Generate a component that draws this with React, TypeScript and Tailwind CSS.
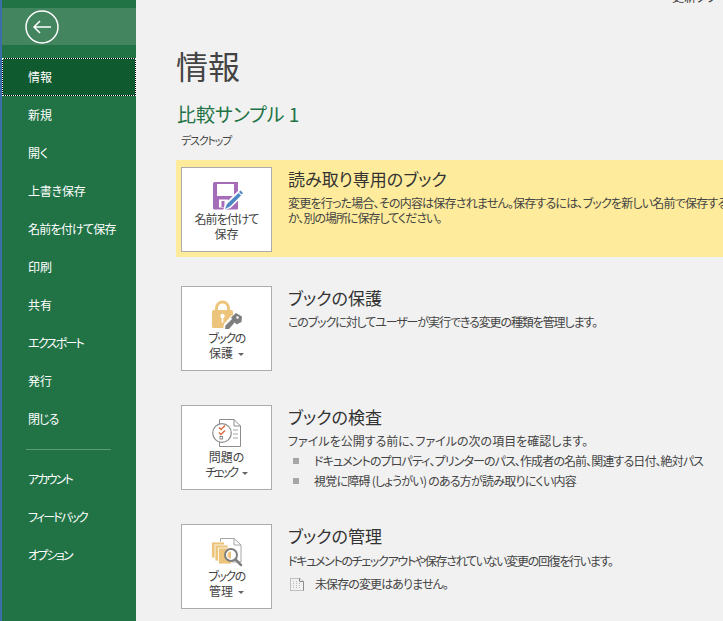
import React from "react";

function SaveIcon() {
  return (
    <svg width="32" height="30" viewBox="0 0 32 30" className="ml-[3px]">
      <path d="M1 2.500 a1.500 1.500 0 0 1 1.500-1.500 H26 V27.500 a1 1 0 0 1-1 1 H2.500 a1.500 1.500 0 0 1-1.500-1.500 Z" fill="#A56CB8" />
      <rect x="5" y="3" width="17" height="12" fill="#fff" />
      <rect x="7" y="18.500" width="9" height="8" fill="#fff" />
      <rect x="9.500" y="20" width="3" height="6" fill="#A56CB8" />
      <path d="M11 29.500 L13.500 22 L27 9 L32 14 L18.500 27 Z" fill="#fff" />
      <path d="M13 28 L15 23 L26.500 12 L29 14.500 L18 25.500 Z" fill="#4E88C4" />
      <path d="M27 11 L28.500 9.500 L31 12 L29.500 13.500 Z" fill="#4E88C4" />
    </svg>
  );
}

function LockIcon() {
  return (
    <svg width="30" height="30" viewBox="0 0 30 30">
      <path d="M4.500 11 V8 a6 6 0 0 1 12 0 V11" fill="none" stroke="#EDC47C" strokeWidth="3" />
      <rect x="0" y="10" width="21" height="18" rx="1.500" fill="#EDC47C" />
      <circle cx="10.500" cy="16" r="2.200" fill="#fff" />
      <rect x="9.700" y="16" width="1.600" height="6.500" fill="#fff" />
      <path d="M11 30 L12 24 L20 15 L28 23 L20 30 Z" fill="#fff" />
      <path d="M13 29 L13.500 25.500 L21 18 L24 21 L17 29 Z" fill="#7F7F7F" />
      <path d="M19 17.500 L24 13 L30 16.500 L29.500 22 L24.500 24.500 Z" fill="#7F7F7F" />
      <circle cx="25.500" cy="17.500" r="1.200" fill="#fff" />
    </svg>
  );
}

function CheckIcon() {
  return (
    <svg width="30" height="30" viewBox="0 0 30 30">
      <path d="M7.500 0.500 H22 L28.500 7 V27.500 H7.500 Z" fill="#fff" stroke="#8C8C8C" strokeWidth="1" />
      <path d="M22 0.500 V7 H28.500" fill="none" stroke="#8C8C8C" strokeWidth="1" />
      <path d="M21 11 H26 M21 15 H26 M21 19 H26" stroke="#A6A6A6" strokeWidth="1" />
      <circle cx="10" cy="14" r="9.300" fill="#fff" stroke="#8C8C8C" strokeWidth="1.200" />
      <path d="M7 8.500 L9 10.500 L13 6.500 M7 13.500 L9 15.500 L13 11.500" fill="none" stroke="#E0683D" strokeWidth="1.400" />
      <rect x="8" y="17.500" width="2.500" height="2.500" fill="none" stroke="#8C8C8C" strokeWidth="1" />
    </svg>
  );
}

function ManageIcon() {
  return (
    <svg width="32" height="30" viewBox="0 0 32 30">
      <path d="M9.500 0.500 H23 L30 7 V24 H9.500 Z" fill="#fff" stroke="#A6A6A6" strokeWidth="1" />
      <path d="M23 0.500 V7 H30" fill="none" stroke="#A6A6A6" strokeWidth="1" />
      <rect x="0.500" y="4" width="13" height="16" fill="#EDC47C" stroke="#fff" strokeWidth="0.800" />
      <rect x="4" y="7" width="13" height="16" fill="#EDC47C" stroke="#fff" strokeWidth="0.800" />
      <rect x="7.500" y="10" width="13" height="16" fill="#EDC47C" stroke="#fff" strokeWidth="0.800" />
      <circle cx="20" cy="17" r="6" fill="#fff" stroke="#7F7F7F" strokeWidth="2" />
      <path d="M16.500 17 a3.500 3.500 0 0 1 3.500-3.500 v7 a3.500 3.500 0 0 1-3.500-3.500Z" fill="#EDC47C" />
      <path d="M24.500 21.500 L30 27" stroke="#7F7F7F" strokeWidth="2.500" strokeLinecap="round" />
    </svg>
  );
}

function Caret() {
  return <span className="inline-block w-0 h-0 ml-[5px] align-middle border-x-[3px] border-x-transparent border-t-[3px] border-t-[#666]" />;
}

function Card({ icon, l1, l2, caret, t1 = "", t2 = "" }: { icon: React.ReactNode; l1: string; l2: string; caret?: boolean; t1?: string; t2?: string }) {
  return (
    <div className="w-[91px] h-[85px] shrink-0 bg-white border border-[#ababab] flex flex-col items-center pt-[12px] text-[12px] leading-[15px] text-[#444]">
      <div className="h-[31px] flex items-center justify-center">{icon}</div>
      <div className={t1}>{l1}</div>
      <div><span className={t2}>{l2}</span>{caret && <Caret />}</div>
    </div>
  );
}

const nav: [string, string][] = [
  ["情報", ""],
  ["新規", ""],
  ["開く", ""],
  ["上書き保存", "tracking-[-0.2px]"],
  ["名前を付けて保存", "tracking-[-0.75px]"],
  ["印刷", ""],
  ["共有", ""],
  ["エクスポート", "tracking-[-1.7px]"],
  ["発行", ""],
  ["閉じる", "tracking-[-1px]"],
];
const nav2: [string, string][] = [
  ["アカウント", "tracking-[-1.8px]"],
  ["フィードバック", "tracking-[-1.9px]"],
  ["オプション", "tracking-[-1.8px]"],
];

function NavItem({ label, t, active }: { label: string; t: string; active?: boolean }) {
  if (active) {
    return (
      <div className="h-[38px] border border-dotted border-white bg-black">
        <div className="h-full flex items-center pl-[25px] text-[12px] text-white bg-[#0F5A2E]">{label}</div>
      </div>
    );
  }
  return <div className={`h-[38px] flex items-center pl-[26px] text-[12px] text-white ${t}`}>{label}</div>;
}

export default function App() {
  return (
    <div
      className="relative w-[723px] h-[621px] overflow-hidden flex bg-[#f1f1f1] text-[#444] [font-feature-settings:'palt']"
      style={{ fontFamily: '"Noto Sans CJK JP", "Noto Sans", sans-serif' }}
    >
      <div className="w-[136px] shrink-0 border-l-2 border-l-[#3B6EA8] bg-[#217346] pt-[8px] h-full">
        <div className="h-[37px] bg-[#43855F] flex items-center pl-[23px]">
          <svg width="34" height="34" viewBox="0 0 34 34">
            <circle cx="17" cy="17" r="16" fill="none" stroke="#fff" strokeWidth="1.500" />
            <path d="M26 17 H9.500 M15 11 L9 17 L15 23" fill="none" stroke="#fff" strokeWidth="1.500" />
          </svg>
        </div>
        <div className="mt-[13px]">
          {nav.map(([n, t], i) => <NavItem key={n} label={n} t={t} active={i === 0} />)}
        </div>
        <div className="mt-[11px] mb-[10px] ml-[24px] mr-[25px] h-px bg-[#5C9A78]" />
        <div>
          {nav2.map(([n, t]) => <NavItem key={n} label={n} t={t} />)}
        </div>
      </div>

      <div className="flex-1 min-w-0 pl-[40px] whitespace-nowrap">
        <div className="pt-[41px] text-[32px] leading-[48px] text-[#444]">情報</div>
        <div className="pl-[1px] mt-[10px] text-[19px] leading-[30px] text-[#217346]">比較サンプル 1</div>
        <div className="pl-[5px] mt-[3px] text-[11px] leading-[16px] text-[#444] tracking-[-1.2px]">デスクトップ</div>

        <div className="mt-[12px] h-[97px] bg-[#FEEB9B] flex pt-[7px] pl-[5px] w-[600px]">
          <Card icon={<SaveIcon />} l1="名前を付けて" l2="保存" t1="tracking-[-1px]" />
          <div className="ml-[16px]">
            <div className="text-[17px] leading-[24px] text-[#333]">読み取り専用のブック</div>
            <div className="text-[12px] leading-[15px] mt-[4px] text-[#444] tracking-[-0.8px]">変更を行った場合、その内容は保存されません。保存するには、ブックを新しい名前で保存する</div>
            <div className="text-[12px] leading-[15px] text-[#444] tracking-[-1px]">か、別の場所に保存してください。</div>
          </div>
        </div>

        <div className="mt-[29px] h-[85px] flex pl-[5px]">
          <Card icon={<LockIcon />} l1="ブックの" l2="保護" caret t1="tracking-[-1.5px]" />
          <div className="ml-[16px]">
            <div className="text-[17px] leading-[24px] text-[#333]">ブックの保護</div>
            <div className="text-[12px] leading-[15px] mt-[4px] tracking-[-1.1px]">このブックに対してユーザーが実行できる変更の種類を管理します。</div>
          </div>
        </div>

        <div className="mt-[34px] h-[85px] flex pl-[5px]">
          <Card icon={<CheckIcon />} l1="問題の" l2="チェック" caret t2="tracking-[-2.5px]" />
          <div className="ml-[16px]">
            <div className="text-[17px] leading-[24px] text-[#333]">ブックの検査</div>
            <div className="text-[12px] leading-[15px] mt-[4px]">ファイルを公開する前に、ファイルの次の項目を確認します。</div>
            <div className="mt-[3px] ml-[5px] flex items-center h-[20px] text-[12px]">
              <span className="w-[6px] h-[6px] bg-[#a6a6a6] mr-[15px]" /><span className="tracking-[-0.9px]">ドキュメントのプロパティ、プリンターのパス、作成者の名前、関連する日付、絶対パス</span>
            </div>
            <div className="ml-[5px] flex items-center h-[19px] text-[12px]">
              <span className="w-[6px] h-[6px] bg-[#a6a6a6] mr-[15px]" /><span className="tracking-[-0.75px]">視覚に障碍 (しょうがい) のある方が読み取りにくい内容</span>
            </div>
          </div>
        </div>

        <div className="mt-[34px] h-[85px] flex pl-[5px]">
          <Card icon={<ManageIcon />} l1="ブックの" l2="管理" caret t1="tracking-[-1.5px]" />
          <div className="ml-[16px]">
            <div className="text-[17px] leading-[24px] text-[#333]">ブックの管理</div>
            <div className="text-[12px] leading-[15px] mt-[5px] tracking-[-1.3px]">ドキュメントのチェックアウトや保存されていない変更の回復を行います。</div>
            <div className="mt-[7px] flex items-center h-[18px] text-[12px]">
              <svg width="16" height="16" viewBox="0 0 16 16" className="mr-[10px] ml-[1px]">
                <path d="M1.500 2.500 H10.500 L14.500 5.500 V14.500 H1.500 Z" fill="none" stroke="#8c8c8c" strokeDasharray="1 1" />
                <path d="M4.500 5 V12 M7.500 5 V12 M10.500 7 V12" stroke="#bbb" strokeDasharray="1 1" />
                <path d="M10.500 2 V5.500 H14.500 M14.500 5.500 V14.500" fill="none" stroke="#8c8c8c" />
              </svg>
              <span className="tracking-[-0.9px]">未保存の変更はありません。</span>
            </div>
          </div>
        </div>
      </div>

      <div className="absolute left-[672px] top-[-10px] text-[12px] leading-[14px] text-[#444] whitespace-nowrap">更新タブ</div>
    </div>
  );
}
